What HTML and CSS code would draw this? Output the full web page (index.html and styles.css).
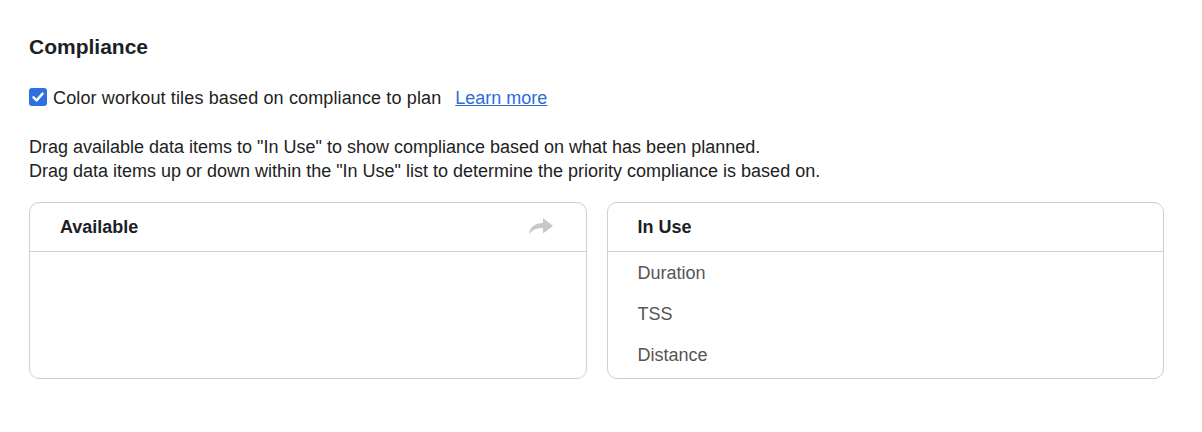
FILE: index.html
```html
<!DOCTYPE html>
<html>
<head>
<meta charset="utf-8">
<link rel="stylesheet" href="styles.css">
</head>
<body>
<div class="page">
  <h2 class="title">Compliance</h2>
  <div class="check-row">
    <label class="check-label">
      <span class="checkbox">
        <svg viewBox="0 0 18 18" width="18" height="18"><path d="M4.5 9.3 L7.6 12.4 L13.6 5.6" fill="none" stroke="#fff" stroke-width="2.4" stroke-linecap="round" stroke-linejoin="round"/></svg>
      </span>
      <span>Color workout tiles based on compliance to plan</span>
    </label>
    <a class="learn" href="#">Learn more</a>
  </div>
  <p class="desc">Drag available data items to "In Use" to show compliance based on what has been planned.<br>Drag data items up or down within the "In Use" list to determine the priority compliance is based on.</p>
  <div class="lists">
    <div class="box">
      <div class="box-head">
        <span>Available</span>
        <svg class="arrow" viewBox="0 0 26 18" width="26" height="18"><path d="M1 17 C2 10 7 6 15 6 L15 1 L25 9 L15 16.5 L15 11 C9 11 5 12.5 1 17 Z" fill="#c8c8c8"/></svg>
      </div>
      <div class="box-body"></div>
    </div>
    <div class="box">
      <div class="box-head"><span>In Use</span></div>
      <div class="box-body">
        <div class="item">Duration</div>
        <div class="item">TSS</div>
        <div class="item">Distance</div>
      </div>
    </div>
  </div>
</div>
</body>
</html>
```
FILE: styles.css
```css
html, body { margin: 0; padding: 0; background: #fff; }
body { font-family: "Liberation Sans", Arial, sans-serif; color: #1f2229; }
.page { padding: 35px 38px 0 29px; }
.title { margin: 0; font-size: 21px; font-weight: bold; line-height: 24px; color: #1c1f26; }
.check-row { display: flex; align-items: center; margin-top: 27px; height: 24px; }
.check-label { display: flex; align-items: center; font-size: 18px; line-height: 24px; color: #222; letter-spacing: 0.13px; }
.checkbox { width: 18px; height: 18px; border-radius: 3px; background: #2f6fe0; display: inline-flex; margin-right: 6px; margin-top: -2px; }
.learn { margin-left: 14px; font-size: 18px; line-height: 24px; color: #2d6cd6; text-decoration: underline; }
.desc { margin: 25px 0 0; font-size: 18px; line-height: 24px; color: #222; }
.lists { display: grid; grid-template-columns: 1fr 1fr; gap: 20px; margin-top: 19px; }
.box { border: 1px solid #cfcfcf; border-radius: 10px; height: 175px; }
.box-head { display: flex; justify-content: space-between; align-items: center; height: 48px; border-bottom: 1px solid #cfcfcf; padding: 0 32px 0 30px; font-weight: bold; font-size: 18px; color: #1c1f26; }
.arrow { margin-top: -3px; }
.box-body { padding: 11px 0 0 30px; }
.item { font-size: 18px; color: #555; line-height: 20px; margin-bottom: 21px; }
```
